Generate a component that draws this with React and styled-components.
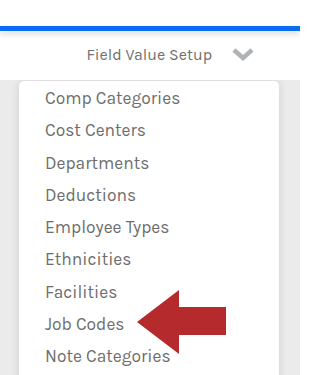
import styled, { createGlobalStyle } from "styled-components";

const GlobalStyle = createGlobalStyle`
    html, body {
        margin: 0;
        padding: 0;
        background: #ffffff;
    }
    body {
        font-family: 'Karla', 'Open Sans', 'Liberation Sans', sans-serif;
        overflow: hidden;
    }
`

const items = [
    "Comp Categories",
    "Cost Centers",
    "Departments",
    "Deductions",
    "Employee Types",
    "Ethnicities",
    "Facilities",
    "Job Codes",
    "Note Categories",
];

export default function App() {
    return (
        <Screen>
            <GlobalStyle />
            <TopSpace />
            <BlueBar />
            <Header>
                <HeaderTitle>Field Value Setup</HeaderTitle>
                <Chevron viewBox="0 0 24 16">
                    <polyline points="3,4 12,12 21,4" />
                </Chevron>
            </Header>
            <Content>
                <Menu>
                    {items.map((item) => (
                        <MenuItem key={item}>{item}</MenuItem>
                    ))}
                </Menu>
                <Arrow viewBox="0 0 90 64">
                    <polygon points="0,32 42,0 42,17 89,17 89,45 42,45 42,64" />
                </Arrow>
            </Content>
        </Screen>
    );
}

const Screen = styled.div`
    width: 300px;
    height: 375px;
    display: flex;
    flex-direction: column;
    overflow: hidden;
`

const TopSpace = styled.div`
    flex-shrink: 0;
    height: 26px;
    background: #ffffff;
`

const BlueBar = styled.div`
    flex-shrink: 0;
    height: 5px;
    background: #0a6cf2;
    box-shadow: 0 3px 6px rgba(0, 0, 0, 0.16);
    position: relative;
    z-index: 2;
`

const Header = styled.div`
    flex-shrink: 0;
    height: 49px;
    display: flex;
    flex-direction: row;
    justify-content: flex-end;
    align-items: center;
    gap: 19px;
    padding-right: 45px;
    background: #ffffff;
`

const HeaderTitle = styled.span`
    font-size: 16px;
    color: #707070;
    margin-top: -2px;
`

const Chevron = styled.svg`
    width: 24px;
    height: 16px;
    margin-top: -4px;
    polyline {
        fill: none;
        stroke: #aeb3b8;
        stroke-width: 4.5;
        stroke-linecap: butt;
    }
`

const Content = styled.div`
    flex: 1;
    min-height: 0;
    overflow: hidden;
    position: relative;
    background: #ebebeb;
    padding: 1px 21px 0 19px;
`

const Menu = styled.ul`
    list-style: none;
    margin: 0;
    padding: 1px 0 0 0;
    background: #ffffff;
    border-radius: 5px;
    box-shadow: 0 0 10px rgba(0, 0, 0, 0.12);
    height: 320px;
`

const MenuItem = styled.li`
    height: 32.25px;
    line-height: 32.25px;
    padding-left: 26px;
    font-size: 17.4px;
    color: #6d6d6d;
    white-space: nowrap;
`

const Arrow = styled.svg`
    position: absolute;
    left: 137px;
    top: 210px;
    width: 90px;
    height: 64px;
    polygon {
        fill: #b52a2c;
    }
`
